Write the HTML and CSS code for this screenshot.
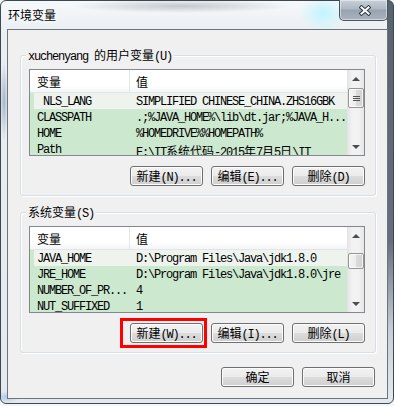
FILE: index.html
```html
<!DOCTYPE html>
<html lang="zh-CN">

<head>
    <meta charset="UTF-8">
    <title>环境变量</title>
    <link rel="stylesheet" href="styles.css">
</head>

<body>
    <div class="window">
        <div class="titlebar">
            <span class="title">环境变量</span>
            <div class="close">
                <svg width="12" height="11" viewBox="0 0 12 11">
                    <path d="M2.5 2.5 L9.5 8.5 M9.5 2.5 L2.5 8.5" stroke="#2f3944" stroke-width="4" stroke-linecap="square" />
                    <path d="M2.5 2.5 L9.5 8.5 M9.5 2.5 L2.5 8.5" stroke="#fff" stroke-width="2" stroke-linecap="square" />
                </svg>
            </div>
        </div>
        <div class="client">
            <div class="group">
                <div class="group-label">xuchenyang <span class="zh">的用户变量</span>(U)</div>
                <div class="list">
                    <div class="list-body">
                        <div class="list-head">
                            <div class="col-name"><span class="zh">变量</span></div>
                            <div class="col-value"><span class="zh">值</span></div>
                        </div>
                        <div class="row sel">
                            <div class="col-name">&nbsp;NLS_LANG</div>
                            <div class="col-value">SIMPLIFIED CHINESE_CHINA.ZHS16GBK</div>
                        </div>
                        <div class="row">
                            <div class="col-name">CLASSPATH</div>
                            <div class="col-value">.;%JAVA_HOME%\lib\dt.jar;%JAVA_H...</div>
                        </div>
                        <div class="row">
                            <div class="col-name">HOME</div>
                            <div class="col-value">%HOMEDRIVE%%HOMEPATH%</div>
                        </div>
                        <div class="row">
                            <div class="col-name">Path</div>
                            <div class="col-value">E:\IT<span class="zh">系统代码</span>-2015<span class="zh">年</span>7<span class="zh">月</span>5<span class="zh">日</span>\IT</div>
                        </div>
                    </div>
                    <div class="scrollbar">
                        <div class="sb-btn up"></div>
                        <div class="sb-track">
                            <div class="thumb">
                                <span class="grip"></span>
                            </div>
                        </div>
                        <div class="sb-btn down"></div>
                    </div>
                </div>
                <div class="buttons">
                    <button class="btn"><span class="zh">新建</span>(N)...</button>
                    <button class="btn"><span class="zh">编辑</span>(E)...</button>
                    <button class="btn"><span class="zh">删除</span>(D)</button>
                </div>
            </div>

            <div class="group">
                <div class="group-label"><span class="zh">系统变量</span>(S)</div>
                <div class="list">
                    <div class="list-body">
                        <div class="list-head">
                            <div class="col-name"><span class="zh">变量</span></div>
                            <div class="col-value"><span class="zh">值</span></div>
                        </div>
                        <div class="row sel">
                            <div class="col-name">JAVA_HOME</div>
                            <div class="col-value">D:\Program Files\Java\jdk1.8.0</div>
                        </div>
                        <div class="row">
                            <div class="col-name">JRE_HOME</div>
                            <div class="col-value">D:\Program Files\Java\jdk1.8.0\jre</div>
                        </div>
                        <div class="row">
                            <div class="col-name">NUMBER_OF_PR...</div>
                            <div class="col-value">4</div>
                        </div>
                        <div class="row">
                            <div class="col-name">NUT_SUFFIXED</div>
                            <div class="col-value">1</div>
                        </div>
                    </div>
                    <div class="scrollbar">
                        <div class="sb-btn up"></div>
                        <div class="sb-track">
                            <div class="thumb low"></div>
                        </div>
                        <div class="sb-btn down"></div>
                    </div>
                </div>
                <div class="buttons">
                    <button class="btn mark"><span class="zh">新建</span>(W)...</button>
                    <button class="btn"><span class="zh">编辑</span>(I)...</button>
                    <button class="btn"><span class="zh">删除</span>(L)</button>
                </div>
            </div>

            <div class="footer">
                <button class="btn"><span class="zh">确定</span></button>
                <button class="btn"><span class="zh">取消</span></button>
            </div>
        </div>
    </div>
</body>

</html>
```

FILE: styles.css
```css
* {
    margin: 0;
    padding: 0;
    box-sizing: border-box;
}

body {
    width: 394px;
    height: 406px;
    overflow: hidden;
    background: #f4f7fa;
    font-family: "Liberation Mono", "Noto Sans CJK SC", monospace;
    font-size: 12px;
    letter-spacing: -1.2px;
    color: #000;
}

.zh {
    font-family: "Noto Sans CJK SC", sans-serif;
    letter-spacing: 0;
}

/* window frame */

.window {
    width: 394px;
    height: 404px;
    border: 1px solid #3e4852;
    border-radius: 6px;
    display: flex;
    flex-direction: column;
    background:
        radial-gradient(ellipse 24px 18px at 322px 12px, rgba(190, 245, 255, 0.95), rgba(190, 245, 255, 0)),
        linear-gradient(#59636e 0, #66707c 60%, #c6cfd7 82%, #e4eaef 100%) right top / 6px 100% no-repeat,
        radial-gradient(ellipse 110px 7px at 180px 5px, rgba(120, 130, 140, 0.4), rgba(120, 130, 140, 0)),
        radial-gradient(ellipse 4px 40px at 3px 100px, rgba(110, 130, 165, 0.55), rgba(110, 130, 165, 0)),
        radial-gradient(ellipse 14px 6px at 6px 396px, rgba(140, 180, 230, 0.6), rgba(140, 180, 230, 0)),
        linear-gradient(#f6f9fb, #eaeff3 30px, #e3e9ee);
}

.titlebar {
    height: 28px;
    display: flex;
    align-items: flex-start;
    padding-left: 7px;
}

.title {
    margin-top: 7px;
    line-height: 14px;
    font-family: "Noto Sans CJK SC", sans-serif;
    letter-spacing: 0;
    text-shadow: 0 0 5px #fff, 0 0 9px #fff;
}

.close {
    margin-left: auto;
    margin-right: 5px;
    margin-top: -1px;
    width: 49px;
    height: 21px;
    border: 1px solid #4a5460;
    border-top: 0;
    border-radius: 0 0 5px 5px;
    background: linear-gradient(#c8d0d9, #aeb8c3 45%, #97a3b0 50%, #a9b3bf);
    box-shadow: inset 0 0 0 1px rgba(255, 255, 255, 0.45);
    display: flex;
    align-items: center;
    justify-content: center;
}

.close svg {
    display: block;
    margin-left: 2px;
}

/* dialog body */

.client {
    margin: 0 5px 4px 6px;
    height: 370px;
    border: 1px solid #6b7581;
    background: #f0f0f0;
    padding: 25px 11px 0 12px;
}

.group {
    position: relative;
    height: 141px;
    border: 1px solid #d5dfe5;
    border-radius: 3px;
    padding: 13px 10px 0 8px;
    box-shadow: inset 1px 1px 0 #fff, 1px 1px 0 #fff;
}

.group + .group {
    margin-top: 16px;
}

.group-label {
    position: absolute;
    left: 5px;
    top: -8px;
    line-height: 14px;
    padding: 0 2px;
    background: #f0f0f0;
    white-space: nowrap;
}

/* list view */

.list {
    display: flex;
    height: 87px;
    border: 1px solid #828790;
    background: #cce8cf;
}

.list-body {
    flex: 1;
    overflow: hidden;
}

.list-head {
    display: flex;
    height: 23px;
    line-height: 24px;
    background: linear-gradient(#fff, #fff 70%, #f4f5f7);
    border-bottom: 1px solid #e3e5e8;
}

.col-name {
    width: 99px;
    padding-left: 7px;
    white-space: nowrap;
    overflow: hidden;
}

.col-value {
    flex: 1;
    padding-left: 7px;
    white-space: nowrap;
    overflow: hidden;
}

.list-head .col-value {
    border-left: 1px solid #e5e5e5;
    padding-left: 6px;
}

.row {
    display: flex;
    height: 16px;
    line-height: 19px;
}

.row.sel {
    background: linear-gradient(to right, #cce8cf 4px, #eef3ee 4px);
}

/* scrollbar */

.scrollbar {
    width: 17px;
    display: flex;
    flex-direction: column;
    background: linear-gradient(to right, #e3e3e3, #f2f2f2 30%, #f2f2f2 70%, #e6e6e6);
}

.sb-btn {
    height: 17px;
    display: flex;
    align-items: center;
    justify-content: center;
}

.sb-btn::before {
    content: "";
    border-left: 4px solid transparent;
    border-right: 4px solid transparent;
}

.sb-btn.up::before {
    border-bottom: 4px solid #4d4d4d;
}

.sb-btn.down::before {
    border-top: 4px solid #4d4d4d;
}

.sb-track {
    flex: 1;
}

.thumb {
    margin: 1px 0 0 1px;
    height: 20px;
    border: 1px solid #959595;
    border-radius: 2px;
    background: linear-gradient(to right, #f5f5f5, #ececec 50%, #dcdcdc 50%, #d2d2d2);
    box-shadow: inset 0 0 0 1px rgba(255, 255, 255, 0.7);
    display: flex;
    align-items: center;
    justify-content: center;
}

.thumb.low {
    margin-top: 9px;
    height: 16px;
}

.grip {
    width: 7px;
    height: 5px;
    border-top: 1px solid #555;
    border-bottom: 1px solid #555;
    background: linear-gradient(transparent 1px, #555 1px, #555 2px, transparent 2px);
}

/* buttons */

.buttons {
    display: flex;
    justify-content: flex-end;
    gap: 8px;
    margin-top: 10px;
}

.footer {
    display: flex;
    justify-content: flex-end;
    gap: 8px;
    margin-top: 14px;
    padding-right: 1px;
}

.btn {
    position: relative;
    width: 73px;
    height: 20px;
    border: 1px solid #707070;
    border-radius: 3px;
    background: linear-gradient(#f2f2f2, #ebebeb 50%, #dddddd 50%, #cfcfcf);
    box-shadow: inset 0 0 0 1px #fcfcfc;
    font: inherit;
    letter-spacing: inherit;
    line-height: 17px;
    color: #000;
    white-space: nowrap;
}

.btn.mark::after {
    content: "";
    position: absolute;
    left: -11px;
    top: -6px;
    right: -5px;
    bottom: -6px;
    border: 3px solid #f00;
}
```
